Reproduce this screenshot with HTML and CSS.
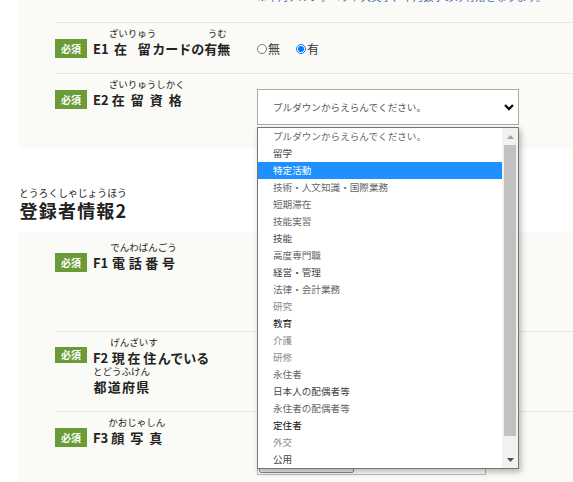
FILE: index.html
```html
<!DOCTYPE html>
<html lang="ja">
<head>
<meta charset="utf-8">
<title>登録者情報</title>
<link rel="stylesheet" href="styles.css">
</head>
<body>
<div class="page">
  <section class="panel panel-first">
    <div class="row row-prev">
      <p class="note">※半角アルファベット大文字、半角数字のみ有効となります。</p>
    </div>
    <div class="row">
      <span class="badge">必須</span>
      <div class="label">
        <div class="line">
          <span class="plain">E1</span>
          <ruby class="overhang"><span class="rbase"><span>在</span><span>留</span></span><rt>ざいりゅう</rt></ruby>
          <span class="plain">カードの</span>
          <ruby><span class="rbase"><span>有</span><span>無</span></span><rt>うむ</rt></ruby>
        </div>
      </div>
      <div class="field field-radio">
        <label class="radio"><input type="radio" name="card">無</label>
        <label class="radio"><input type="radio" name="card" checked>有</label>
      </div>
    </div>
    <div class="row">
      <span class="badge">必須</span>
      <div class="label">
        <div class="line">
          <span class="plain">E2</span>
          <ruby><span class="rbase"><span>在</span><span>留</span><span>資</span><span>格</span></span><rt>ざいりゅうしかく</rt></ruby>
        </div>
      </div>
      <div class="field field-select">
        <div class="select">
          <span>プルダウンからえらんでください。</span>
          <svg class="chevron" width="10" height="7" viewBox="0 0 10 7"><polyline points="1,1 5,5 9,1" fill="none" stroke="#111" stroke-width="2.4"/></svg>
        </div>
        <div class="popup">
          <ul class="options">
            <li class="c3">プルダウンからえらんでください。</li>
            <li class="c2">留学</li>
            <li class="sel">特定活動</li>
            <li class="c3">技術・人文知識・国際業務</li>
            <li class="c3">短期滞在</li>
            <li class="c3">技能実習</li>
            <li class="c2">技能</li>
            <li class="c3">高度専門職</li>
            <li class="c2">経営・管理</li>
            <li class="c3">法律・会計業務</li>
            <li class="c4">研究</li>
            <li class="c1">教育</li>
            <li class="c4">介護</li>
            <li class="c4">研修</li>
            <li class="c3">永住者</li>
            <li class="c2">日本人の配偶者等</li>
            <li class="c3">永住者の配偶者等</li>
            <li class="c1">定住者</li>
            <li class="c4">外交</li>
            <li class="c2">公用</li>
          </ul>
          <div class="scrollbar">
            <div class="sb-btn"><svg width="7" height="4" viewBox="0 0 7 4"><polygon points="0,4 3.5,0 7,4" fill="#a3a3a3"/></svg></div>
            <div class="sb-track"><div class="sb-thumb"></div></div>
            <div class="sb-btn"><svg width="7" height="4" viewBox="0 0 7 4"><polygon points="0,0 7,0 3.5,4" fill="#505050"/></svg></div>
          </div>
        </div>
      </div>
    </div>
  </section>

  <h2 class="heading">
    <ruby><span class="rbase"><span>登</span><span>録</span><span>者</span><span>情</span><span>報</span><span>2</span></span><rt>とうろくしゃじょうほう</rt></ruby>
  </h2>

  <section class="panel">
    <div class="row">
      <span class="badge">必須</span>
      <div class="label">
        <div class="line">
          <span class="plain">F1</span>
          <ruby class="spaced"><span class="rbase"><span>電</span><span>話</span><span>番</span><span>号</span></span><rt>でんわばんごう</rt></ruby>
        </div>
      </div>
      <div class="field field-tel"></div>
    </div>
    <div class="row">
      <span class="badge badge-short">必須</span>
      <div class="label">
        <div class="line">
          <span class="plain">F2</span>
          <ruby class="spaced"><span class="rbase"><span>現</span><span>在</span><span>住</span></span><rt>げんざいす</rt></ruby>
          <span class="plain">んでいる</span>
        </div>
        <div class="line">
          <ruby><span class="rbase"><span>都</span><span>道</span><span>府</span><span>県</span></span><rt>とどうふけん</rt></ruby>
        </div>
      </div>
      <div class="field"></div>
    </div>
    <div class="row">
      <span class="badge">必須</span>
      <div class="label">
        <div class="line">
          <span class="plain">F3</span>
          <ruby><span class="rbase"><span>顔</span><span>写</span><span>真</span></span><rt>かおじゃしん</rt></ruby>
        </div>
      </div>
      <div class="field field-file">
        <div class="file"><span class="file-btn">ファイルを選択</span><span class="file-name">選択されていません</span></div>
      </div>
    </div>
  </section>
</div>
</body>
</html>
```

FILE: styles.css
```css
html, body {
  margin: 0;
  padding: 0;
  background: #fff;
  overflow: hidden;
}

body {
  width: 573px;
  height: 482px;
  font-family: "Noto Sans CJK JP", "Noto Sans", sans-serif;
  color: #222;
}

.page {
  padding-left: 18px;
}

.panel {
  background: #fafaf6;
  padding: 5px 0 13px 37px;
}

.panel-first {
  margin-top: -13px;
  padding-top: 0;
}

.row {
  display: flex;
  align-items: flex-start;
  padding: 11px 0 10px;
  border-top: 1px solid #e6e6e4;
}

.panel > .row:first-child {
  border-top: none;
}

.row-prev {
  padding: 0 0 15px;
}

.note {
  margin: 0 0 0 202px;
  font-size: 10.4px;
  line-height: 20px;
  color: #3d68b0;
  white-space: nowrap;
}

.badge {
  flex: none;
  width: 32px;
  height: 19px;
  margin: 5px 6px 0 0;
  background: #6a9b37;
  color: #fff;
  font-size: 10px;
  font-weight: 700;
  line-height: 19px;
  text-align: center;
}

.badge-short {
  height: 16px;
  line-height: 16px;
  margin-top: 4px;
}

/* labels with furigana */
.label {
  flex: none;
  width: 150px;
  margin-right: 14px;
  display: flex;
  flex-direction: column;
  font-size: 13px;
  font-weight: 700;
}

.line {
  display: flex;
  align-items: flex-end;
  height: 29px;
}

.plain {
  line-height: 15px;
  padding-bottom: 7px;
  white-space: nowrap;
}

ruby {
  display: inline-flex;
  flex-direction: column-reverse;
  align-items: stretch;
  padding-bottom: 7px;
}

ruby.overhang {
  margin-right: -4px;
}

ruby.spaced {
  margin-left: 2px;
}

.rbase {
  display: flex;
  justify-content: space-around;
  line-height: 15px;
}

rt {
  display: block;
  font-size: 9.5px;
  font-weight: 400;
  line-height: 10px;
  margin-bottom: 3px;
  text-align: center;
  white-space: nowrap;
}

/* fields */
.field {
  flex: 1;
  min-width: 0;
  position: relative;
}

.field-radio {
  display: flex;
  align-items: center;
  height: 29px;
  font-size: 12px;
  color: #333;
}

.radio {
  display: inline-flex;
  align-items: center;
  gap: 1px;
  margin-right: 16px;
}

.radio input {
  width: 10px;
  height: 10px;
  margin: 0;
}

.field-select {
  margin-top: 4px;
}

.select {
  box-sizing: border-box;
  width: 262px;
  height: 36px;
  border: 1px solid #acacac;
  background: #fff;
  display: flex;
  align-items: center;
  justify-content: space-between;
  padding: 0 4px 0 15px;
  font-size: 9.6px;
  color: #555;
}

.chevron {
  display: block;
}

.popup {
  position: absolute;
  top: 38px;
  left: 0;
  z-index: 10;
  box-sizing: border-box;
  width: 262px;
  height: 342px;
  border: 1px solid #767676;
  background: #fff;
  display: flex;
  box-shadow: 2px 3px 6px rgba(0, 0, 0, 0.28);
}

.options {
  list-style: none;
  margin: 0;
  padding: 0;
  flex: 1;
  min-width: 0;
}

.options li {
  height: 17px;
  line-height: 17px;
  padding-left: 15px;
  font-size: 9.6px;
  white-space: nowrap;
  overflow: hidden;
}

.options .c1 { color: #111; }
.options .c2 { color: #444; }
.options .c3 { color: #666; }
.options .c4 { color: #8a8a8a; }

.options .sel {
  background: #1e90ff;
  color: #fff;
}

.scrollbar {
  flex: none;
  width: 16px;
  background: #f1f1f1;
  display: flex;
  flex-direction: column;
}

.sb-btn {
  height: 17px;
  display: flex;
  align-items: center;
  justify-content: center;
}

.sb-btn svg {
  display: block;
}

.sb-track {
  flex: 1;
  padding: 0 2px;
}

.sb-thumb {
  height: 291px;
  background: #c1c1c1;
}

/* section heading */
.heading {
  display: flex;
  align-items: flex-end;
  height: 30px;
  margin: 47px 0 7px 1px;
  font-size: 18px;
  font-weight: 700;
}

.heading ruby {
  padding-bottom: 5px;
}

.heading .rbase {
  line-height: 20px;
}

.heading rt {
  font-size: 9.8px;
  margin-bottom: 2px;
}

.field-tel {
  height: 73px;
}

.field-file {
  margin-top: 22px;
}

.file {
  box-sizing: border-box;
  width: 229px;
  height: 30px;
  padding: 1px;
  border: 1px solid #bdbdbd;
  background: #fff;
  display: flex;
  align-items: stretch;
  font-size: 10px;
}

.file-btn {
  box-sizing: border-box;
  width: 95px;
  border: 1px solid #8f8f8f;
  border-radius: 2px;
  background: #efefef;
  display: flex;
  align-items: center;
  justify-content: center;
}

.file-name {
  padding-left: 6px;
  display: flex;
  align-items: center;
}
```
